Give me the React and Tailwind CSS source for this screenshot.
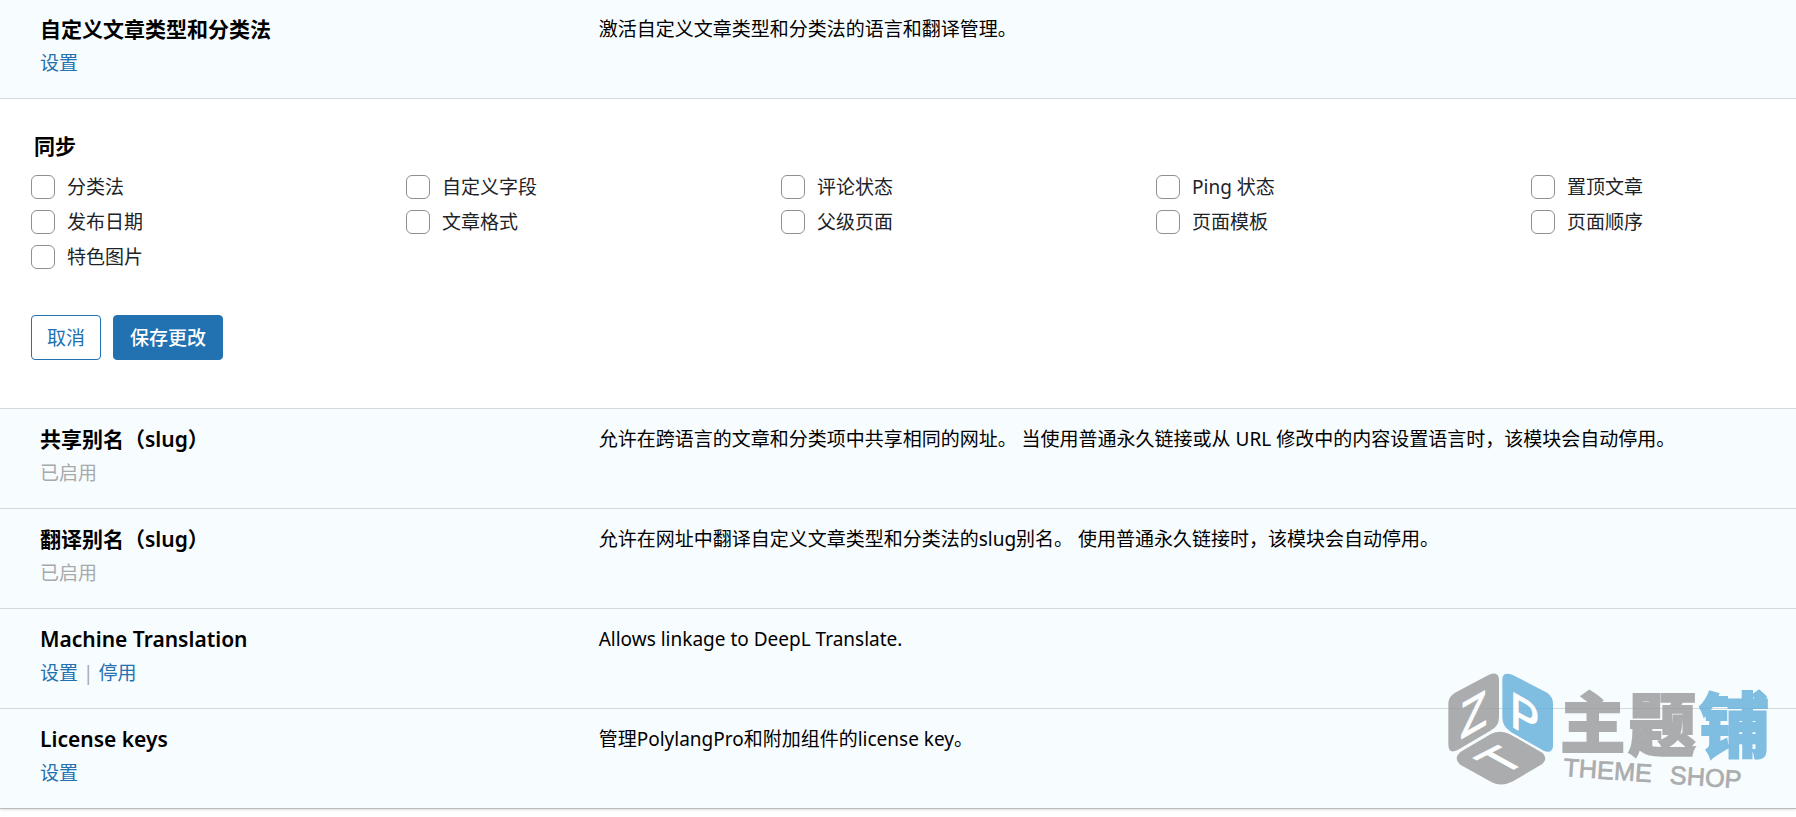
const options = [
  "分类法",
  "自定义字段",
  "评论状态",
  "Ping 状态",
  "置顶文章",
  "发布日期",
  "文章格式",
  "父级页面",
  "页面模板",
  "页面顺序",
  "特色图片",
];

function ActionLink({ children }) {
  return (
    <a href="#" className="text-[#2271b1] hover:text-[#135e96]">
      {children}
    </a>
  );
}

function ModuleRow({ title, description, children }) {
  return (
    <tr className="border-b border-[#d5d9dc] bg-[#f7fcfe] align-top last:border-[#b9bcbf]">
      <td className="w-1/3 pt-[15px] pb-5 pl-10">
        <strong className="block text-[21px] leading-[30px] font-semibold text-black">{title}</strong>
        <div className="mt-1 text-[#a7aaad]">{children}</div>
      </td>
      <td className="pt-[15px] pr-4">
        <p className="text-black">{description}</p>
      </td>
    </tr>
  );
}

function SyncSettings() {
  return (
    <tr className="border-b border-[#d5d9dc] bg-white">
      <td colSpan={2} className="pt-8 pb-12 pl-[31px]">
        <form onSubmit={(e) => e.preventDefault()}>
          <fieldset>
            <legend className="px-[3px] text-[21px] leading-[30px] font-semibold text-black">同步</legend>
            <div className="mt-2 grid grid-cols-[repeat(4,minmax(0,375px))_1fr]">
              {options.map((name) => (
                <label key={name} className="flex h-[35px] items-center gap-3 text-[#1d2327]">
                  <input
                    type="checkbox"
                    className="size-6 appearance-none rounded-md border border-[#8c8f94] bg-white checked:bg-[#2271b1]"
                  />
                  {name}
                </label>
              ))}
            </div>
          </fieldset>
          <div className="mt-[41px] flex gap-3">
            <button
              type="button"
              className="h-[45px] rounded border border-[#2271b1] bg-white px-[15px] text-[#2271b1]"
            >
              取消
            </button>
            <button
              type="submit"
              className="h-[45px] rounded border border-[#2271b1] bg-[#2271b1] px-4 font-medium text-white"
            >
              保存更改
            </button>
          </div>
        </form>
      </td>
    </tr>
  );
}

function ShopLogo() {
  return (
    <svg
      viewBox="70 55 990 370"
      className="pointer-events-none absolute right-[23px] bottom-[25px] w-[330px] overflow-visible opacity-80"
      role="img"
      aria-label="主题铺 THEME SHOP"
    >
      {/* cube */}
      <path
        d="M208 72Q238 60 238 88V200Q238 228 212 240L114 298Q86 312 86 280V160Q86 138 106 126Z"
        fill="#98999b"
      />
      <path
        d="M278 72L382 126Q400 138 400 160V288Q396 310 372 300L275 245Q248 228 248 200V86Q248 62 278 72Z"
        fill="#62aedb"
      />
      <path
        d="M215 249Q240 238 268 249L368 306Q386 322 368 340L280 392Q246 410 215 394L122 342Q100 324 122 304Z"
        fill="#98999b"
      />
      <g fill="#fff" stroke="#fff" strokeWidth="4" fontSize="150" className="font-['Liberation_Sans',sans-serif]">
        <text transform="matrix(0.87 -0.5 0 1 122 266)">Z</text>
        <text transform="matrix(0.87 0.5 0 1 272 224)">P</text>
        <text transform="matrix(0.87 -0.45 0.87 0.48 248 373)">T</text>
      </g>

      {/* name */}
      <g
        fill="#98999b"
        stroke="#98999b"
        strokeWidth="6"
        className="font-['Noto_Sans_CJK_SC',sans-serif] font-black"
      >
        <text x="422" y="288" fontSize="195">主</text>
        <text x="626" y="297" fontSize="203">题</text>
        <text x="838" y="303" fontSize="212" fill="#62aedb" stroke="#62aedb">铺</text>
      </g>
      <g
        transform="rotate(4 428 374)"
        fontSize="76"
        fill="#98999b"
        stroke="#98999b"
        strokeWidth="2"
        className="font-['Liberation_Sans',sans-serif]"
      >
        <text x="430" y="376">THEME</text>
        <text x="750" y="376">SHOP</text>
      </g>
    </svg>
  );
}

export default function App() {
  return (
    <div className="relative min-h-screen overflow-hidden bg-white font-['Noto_Sans','Noto_Sans_CJK_SC',sans-serif] text-[19px] leading-[30px]">
      <table className="-mt-px w-full table-fixed border-collapse shadow-sm">
        <tbody>
          <ModuleRow title="自定义文章类型和分类法" description="激活自定义文章类型和分类法的语言和翻译管理。">
            <ActionLink>设置</ActionLink>
          </ModuleRow>
          <SyncSettings />
          <ModuleRow
            title="共享别名（slug）"
            description="允许在跨语言的文章和分类项中共享相同的网址。 当使用普通永久链接或从 URL 修改中的内容设置语言时，该模块会自动停用。"
          >
            已启用
          </ModuleRow>
          <ModuleRow
            title="翻译别名（slug）"
            description="允许在网址中翻译自定义文章类型和分类法的slug别名。 使用普通永久链接时，该模块会自动停用。"
          >
            已启用
          </ModuleRow>
          <ModuleRow title="Machine Translation" description="Allows linkage to DeepL Translate.">
            <ActionLink>设置</ActionLink> | <ActionLink>停用</ActionLink>
          </ModuleRow>
          <ModuleRow title="License keys" description="管理PolylangPro和附加组件的license key。">
            <ActionLink>设置</ActionLink>
          </ModuleRow>
        </tbody>
      </table>
      <ShopLogo />
    </div>
  );
}
